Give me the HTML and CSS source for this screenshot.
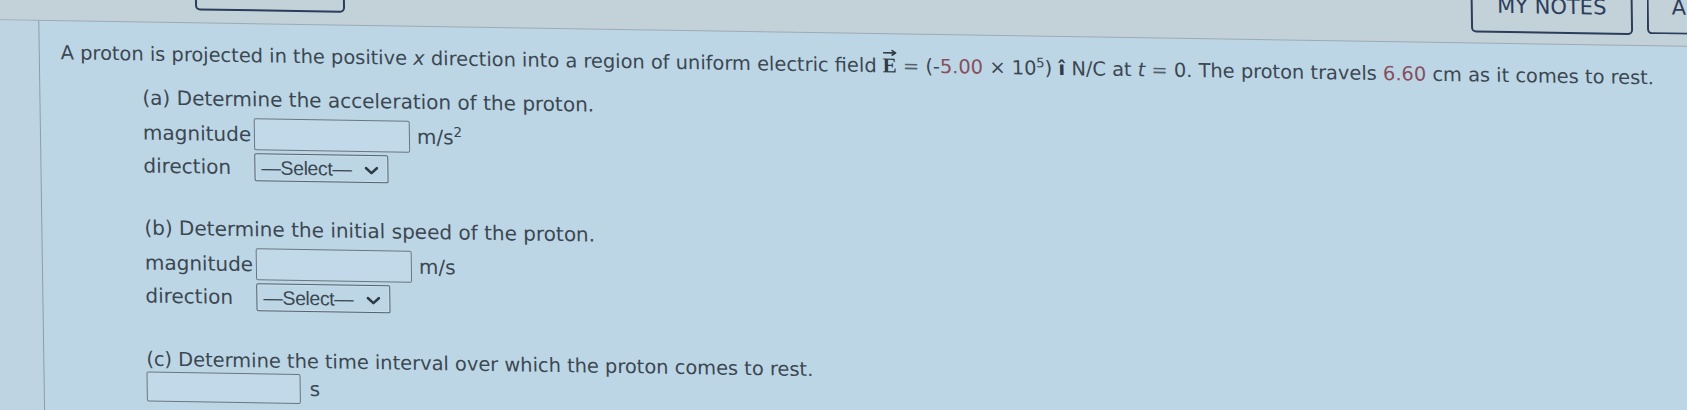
FILE: index.html
```html
<!DOCTYPE html>
<html lang="en">
<head>
<meta charset="utf-8">
<title>Proton in electric field</title>
<link rel="stylesheet" href="styles.css">
</head>
<body>
<div class="page">
  <header class="topbar">
    <div class="tab tab-left"></div>
    <div class="tab tab-notes"><span>MY NOTES</span></div>
    <div class="tab tab-ask"><span>A</span></div>
  </header>
  <div class="main">
    <aside class="sidebar"></aside>
    <section class="content">
      <p class="stem">A proton is projected in the positive <i>x</i> direction into a region of uniform electric field <span class="vec">E<svg class="vec-arrow" width="14" height="7" viewBox="0 0 14 7"><path d="M0.5 3.5H12.5M9 0.8L13 3.5L9 6.2" fill="none" stroke="#2f3b45" stroke-width="1.6"/></svg></span> <span class="op">=</span> (-<span class="val">5.00</span> × 10<sup>5</sup>) <b class="hat">î</b> N/C at <i>t</i> <span class="op">=</span> 0. The proton travels <span class="val">6.60</span> cm as it comes to rest.</p>

      <div class="part part-a">
        <p class="q">(a) Determine the acceleration of the proton.</p>
        <div class="row"><span class="lbl">magnitude</span><span class="box"></span><span class="unit">m/s<sup>2</sup></span></div>
        <div class="row"><span class="lbl">direction</span><span class="select"><span>—Select—</span><svg class="chev" width="14" height="9" viewBox="0 0 14 9"><path d="M1.5 2L7 7L12.5 2" fill="none" stroke="#2e3a44" stroke-width="2.6" stroke-linecap="round" stroke-linejoin="round"/></svg></span></div>
      </div>

      <div class="part part-b">
        <p class="q">(b) Determine the initial speed of the proton.</p>
        <div class="row"><span class="lbl">magnitude</span><span class="box"></span><span class="unit">m/s</span></div>
        <div class="row"><span class="lbl">direction</span><span class="select"><span>—Select—</span><svg class="chev" width="14" height="9" viewBox="0 0 14 9"><path d="M1.5 2L7 7L12.5 2" fill="none" stroke="#2e3a44" stroke-width="2.6" stroke-linecap="round" stroke-linejoin="round"/></svg></span></div>
      </div>

      <div class="part part-c">
        <p class="q q-tight">(c) Determine the time interval over which the proton comes to rest.</p>
        <div class="row"><span class="box box-s"></span><span class="unit unit-s">s</span></div>
      </div>
    </section>
  </div>
</div>
</body>
</html>
```

FILE: styles.css
```css
html, body {
  margin: 0;
  height: 100%;
  overflow: hidden;
}

body {
  background: #bdd5e4;
  font-family: "DejaVu Sans", Verdana, sans-serif;
  color: #3b4751;
}

.page {
  margin-left: -20px;
  min-height: 430px;
  display: flex;
  flex-direction: column;
  background: #bdd6e6;
  transform: skew(0.85deg, 0.9deg);
  transform-origin: 0 0;
}

/* ---------- top bar ---------- */
.topbar {
  margin-top: -40px;
  height: 60px;
  box-sizing: border-box;
  padding-left: 20px;
  background: #c3d1d9;
  border-bottom: 1px solid #9cacb6;
  display: flex;
  align-items: flex-end;
  flex: none;
}

.tab {
  box-sizing: border-box;
  border: 2px solid #2c3d5c;
  border-radius: 0 0 5px 5px;
  color: #2c3d5c;
  font-size: 21px;
  line-height: 21px;
}

.tab-left {
  margin-left: 195px;
  width: 150px;
  height: 40px;
  margin-bottom: 12px;
}

.tab-notes {
  margin-left: auto;
  margin-right: 14px;
  width: 162px;
  height: 50px;
  margin-bottom: 10px;
  padding-bottom: 14px;
  display: flex;
  align-items: flex-end;
  justify-content: center;
}

.tab-ask {
  width: 60px;
  height: 50px;
  margin-bottom: 11px;
  margin-right: -20px;
  padding-left: 23px;
  padding-bottom: 14px;
  border-right: none;
  border-radius: 0 0 0 5px;
  display: flex;
  align-items: flex-end;
}

/* ---------- main ---------- */
.main {
  display: flex;
  flex: 1;
}

.sidebar {
  flex: none;
  width: 58px;
  background: #bed4e2;
  border-right: 1px solid #8d9ea9;
}

.content {
  flex: 1;
  padding-left: 21px;
  font-size: 20px;
}

.stem {
  margin: 19px 0 0;
  font-size: 19.4px;
  line-height: 24px;
  white-space: nowrap;
}

.val {
  color: #864f5d;
}

.op {
  color: #55626c;
}

.vec {
  position: relative;
  display: inline-block;
  font-family: "Liberation Serif", "Times New Roman", serif;
  font-weight: bold;
  font-size: 21px;
  color: #2f3b45;
}

.vec-arrow {
  position: absolute;
  left: 0;
  top: -4px;
}

.hat {
  color: #2f3b45;
}

sup {
  font-size: 0.68em;
  line-height: 0;
  vertical-align: 0.55em;
}

.part {
  margin-left: 81px;
}

.part-a {
  margin-top: 19px;
}

.part + .part {
  margin-top: 36px;
}

.part-c {
  margin-top: 38px !important;
}

.q {
  margin: 0 0 7px;
  line-height: 24px;
  white-space: nowrap;
}

.part-c .q {
  font-size: 19.4px;
}

.q-tight {
  margin-bottom: 0;
}

.row {
  display: flex;
  align-items: center;
  white-space: nowrap;
}

.row + .row {
  margin-top: 3px;
}

.lbl {
  flex: none;
  width: 111px;
}

.box {
  flex: none;
  width: 156px;
  height: 32px;
  box-sizing: border-box;
  border: 1px solid #6a7781;
  border-radius: 2px;
  background: #c1d9e8;
}

.box-s {
  width: 154px;
  height: 30px;
}

.unit {
  margin-left: 7px;
}

.unit-s {
  margin-left: 9px;
}

.select {
  flex: none;
  width: 134px;
  height: 28px;
  box-sizing: border-box;
  border: 1px solid #56636d;
  box-shadow: inset 0 0 0 1px rgba(230, 240, 248, 0.35);
  border-radius: 2px;
  padding: 0 9px 0 6px;
  display: flex;
  align-items: center;
  justify-content: space-between;
  font-family: "Liberation Sans", Arial, sans-serif;
  font-size: 19.5px;
  letter-spacing: -0.4px;
  color: #3c4852;
}

.chev {
  flex: none;
  margin-top: 2px;
}
```
